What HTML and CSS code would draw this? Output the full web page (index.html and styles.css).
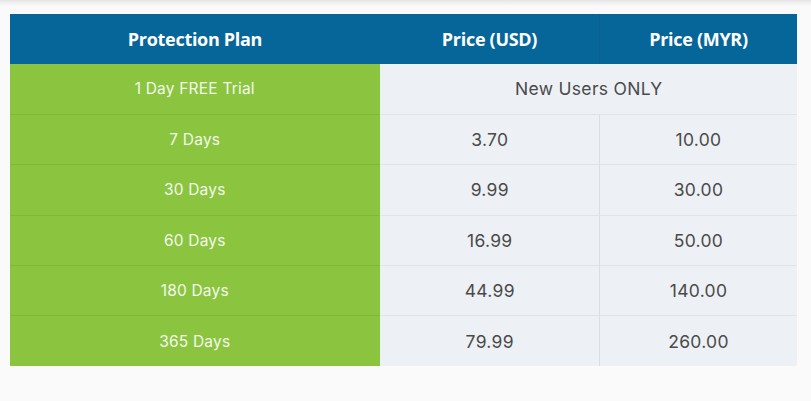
FILE: index.html
```html
<!DOCTYPE html>
<html>
<head>
<meta charset="utf-8">
<link rel="stylesheet" href="styles.css">
</head>
<body>
<div class="topbar"></div>
<div class="wrap">
<table class="plans">
  <thead>
    <tr>
      <th class="c-plan">Protection Plan</th>
      <th class="c-usd">Price (USD)</th>
      <th class="c-myr">Price (MYR)</th>
    </tr>
  </thead>
  <tbody>
    <tr><td class="plan">1 Day FREE Trial</td><td class="price" colspan="2">New Users ONLY</td></tr>
    <tr><td class="plan">7 Days</td><td class="price">3.70</td><td class="price">10.00</td></tr>
    <tr><td class="plan">30 Days</td><td class="price">9.99</td><td class="price">30.00</td></tr>
    <tr><td class="plan">60 Days</td><td class="price">16.99</td><td class="price">50.00</td></tr>
    <tr><td class="plan">180 Days</td><td class="price">44.99</td><td class="price">140.00</td></tr>
    <tr><td class="plan">365 Days</td><td class="price">79.99</td><td class="price">260.00</td></tr>
  </tbody>
</table>
</div>
</body>
</html>
```
FILE: styles.css
```css
html, body {
  margin: 0;
  padding: 0;
  background: #fafafa;
}
body {
  font-family: "Inter", "Open Sans", sans-serif;
}
.topbar {
  height: 6px;
  background: linear-gradient(#e6e6e6, #fafafa);
}
.wrap {
  padding: 8px 14px 0 10px;
}
.plans {
  width: 787px;
  border-collapse: collapse;
  table-layout: fixed;
}
.plans th {
  height: 50px;
  padding: 0;
  background: #066699;
  color: #fff;
  font-family: "Open Sans", sans-serif;
  font-weight: 700;
  font-size: 18px;
  letter-spacing: -0.3px;
  text-align: center;
}
.plans th.c-plan { width: 370px; }
.plans th.c-usd { width: 219px; border-right: 1px solid #0a5f8c; }
.plans th.c-myr { width: auto; }
.plans td {
  height: 50.4px;
  padding: 0;
  text-align: center;
  border-top: 1px solid #dfe4ea;
  box-sizing: border-box;
}
.plans tbody tr:first-child td { border-top: none; }
.plans td.plan {
  background: #8bc540;
  color: #f3f8ec;
  font-size: 15.5px;
  letter-spacing: 0.2px;
  border-top-color: #80b83a;
  border-right: 1px solid #e9eef3;
}
.plans td.price {
  background: #edf1f5;
  color: #4a4a4a;
  font-size: 17.5px;
  letter-spacing: 0.3px;
}
.plans td.price + td.price {
  border-left: 1px solid #d9dee3;
}
```
